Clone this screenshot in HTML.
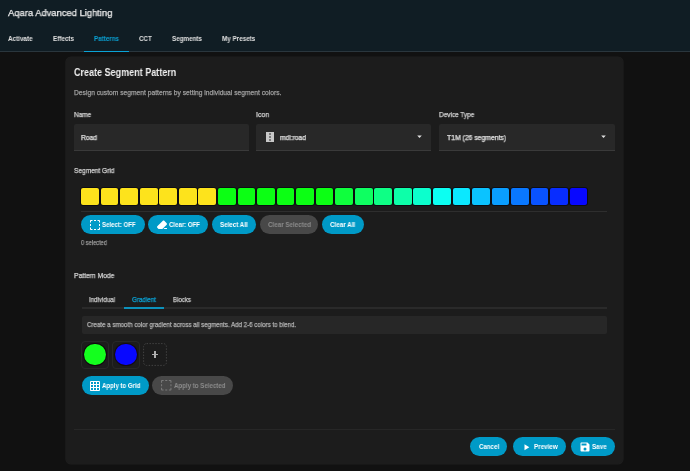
<!DOCTYPE html>
<html><head><meta charset="utf-8">
<style>
*{box-sizing:border-box;margin:0;padding:0}
html,body{width:690px;height:471px;overflow:hidden;background:#111111;font-family:"Liberation Sans",sans-serif;color:#e1e1e1}
.a{position:absolute}
.t{position:absolute;line-height:1;white-space:nowrap;transform-origin:0 0;will-change:transform;-webkit-text-stroke:0.25px currentColor}
.b{font-weight:bold;-webkit-text-stroke:0}
.field{position:absolute;top:123.5px;height:27.5px;background:#282828;border-radius:2px 2px 0 0;border-bottom:1px solid #3a3a3a}
.seg{position:absolute;top:188px;width:17.7px;height:17.2px;border-radius:2px;box-shadow:0 0 0 0.8px rgba(0,0,12,0.7)}
.btn{position:absolute;height:19px;border-radius:10px;background:#009ac7}
.btn.dis{background:#484848}
.divider{position:absolute;height:1.5px;background:#2e2e2e}
</style></head><body>

<div class="a" style="left:0;top:0;width:690px;height:51px;background:#101d24"></div>
<div class="a" style="left:0;top:51px;width:690px;height:1px;background:#2a363d"></div>
<div class="a" style="left:84px;top:50.7px;width:45px;height:1.5px;background:#0aa3d6"></div>
<div class="a" style="left:66.4px;top:57.4px;width:556.2px;height:407px;background:#1c1c1c;border-radius:5px;box-shadow:0 0 0 0.6px rgba(255,255,255,0.06)"></div>
<div class="field" style="left:74px;width:175px"></div>
<div class="field" style="left:256px;width:175.4px"></div>
<div class="field" style="left:439.4px;width:175.3px"></div>
<svg class="a" style="left:263.9px;top:130.8px" width="12" height="12" viewBox="0 0 24 24"><path fill="#c8c8c8" d="M11,16H13V20H11M11,10H13V14H11M11,4H13V8H11M4,22H20V2H4V22Z"/></svg>
<svg class="a" style="left:414.4px;top:131.3px" width="11" height="11" viewBox="0 0 24 24"><path fill="#e0e0e0" d="M7,10L12,15L17,10H7Z"/></svg>
<svg class="a" style="left:597.5px;top:131.2px" width="11" height="11" viewBox="0 0 24 24"><path fill="#e0e0e0" d="M7,10L12,15L17,10H7Z"/></svg>
<div class="seg" style="left:81.20px;background:#fde31c"></div><div class="seg" style="left:100.74px;background:#fde31c"></div><div class="seg" style="left:120.29px;background:#fde31c"></div><div class="seg" style="left:139.83px;background:#fde31c"></div><div class="seg" style="left:159.38px;background:#fde31c"></div><div class="seg" style="left:178.92px;background:#fde31c"></div><div class="seg" style="left:198.46px;background:#fde31c"></div><div class="seg" style="left:218.01px;background:#0cff14"></div><div class="seg" style="left:237.55px;background:#0cff14"></div><div class="seg" style="left:257.10px;background:#0cff14"></div><div class="seg" style="left:276.64px;background:#0cff14"></div><div class="seg" style="left:296.18px;background:#0cff14"></div><div class="seg" style="left:315.73px;background:#0cff14"></div><div class="seg" style="left:335.27px;background:#0fff3d"></div><div class="seg" style="left:354.82px;background:#0eff61"></div><div class="seg" style="left:374.36px;background:#0eff85"></div><div class="seg" style="left:393.90px;background:#0dffa9"></div><div class="seg" style="left:413.45px;background:#0cffcd"></div><div class="seg" style="left:432.99px;background:#0cfff2"></div><div class="seg" style="left:452.54px;background:#0be8ff"></div><div class="seg" style="left:472.08px;background:#0bc3ff"></div><div class="seg" style="left:491.62px;background:#0a9eff"></div><div class="seg" style="left:511.17px;background:#0978ff"></div><div class="seg" style="left:530.71px;background:#0953ff"></div><div class="seg" style="left:550.26px;background:#082dff"></div><div class="seg" style="left:569.80px;background:#0808ff"></div>
<div class="divider" style="left:81px;top:210.8px;width:526px"></div>
<div class="btn" style="left:81px;top:215px;width:63.5px"></div>
<svg class="a" style="left:88.6px;top:218.6px" width="12" height="12" viewBox="0 0 24 24"><path fill="#fff" d="M2,4C2,2.89 2.9,2 4,2H7V4H4V7H2V4M22,4V7H20V4H17V2H20A2,2 0 0,1 22,4M20,20V17H22V20C22,21.11 21.1,22 20,22H17V20H20M2,20V17H4V20H7V22H4A2,2 0 0,1 2,20M10,2H14V4H10V2M10,20H14V22H10V20M20,10H22V14H20V10M2,10H4V14H2V10Z"/></svg>
<div class="btn" style="left:148px;top:215px;width:60px"></div>
<svg class="a" style="left:156px;top:218.5px" width="12" height="12" viewBox="0 0 24 24"><path fill="#fff" d="M15.14,3C14.63,3 14.12,3.2 13.73,3.59L2.59,14.73C1.81,15.5 1.81,16.77 2.59,17.56L5.03,20H12.69L21.41,11.27C22.2,10.5 22.2,9.23 21.41,8.44L16.56,3.59C16.17,3.2 15.65,3 15.14,3M17,18L15,20H22V18"/></svg>
<div class="btn" style="left:211.7px;top:215px;width:44.4px"></div>
<div class="btn dis" style="left:259.8px;top:215px;width:58.7px"></div>
<div class="btn" style="left:322.2px;top:215px;width:41.6px"></div>
<div class="divider" style="left:81.5px;top:307.2px;width:525.5px;height:1.5px;background:#2a2a2a"></div>
<div class="a" style="left:124.4px;top:307px;width:39.6px;height:1.7px;background:#0c92bc"></div>
<div class="a" style="left:81.5px;top:316px;width:525.5px;height:17.5px;background:#272727;border-radius:2px"></div>
<div class="a" style="left:81.2px;top:341.2px;width:27.5px;height:27.5px;border:1px solid #282828;border-radius:4px"></div>
<div class="a" style="left:84.2px;top:343.8px;width:21.6px;height:21.6px;border-radius:50%;background:#14ff1e;box-shadow:0 0 0 1px rgba(16,0,12,0.8)"></div>
<div class="a" style="left:112.4px;top:341.2px;width:27.5px;height:27.5px;border:1px solid #282828;border-radius:4px"></div>
<div class="a" style="left:115.4px;top:343.8px;width:21.6px;height:21.6px;border-radius:50%;background:#0808ff;box-shadow:0 0 0 1px rgba(16,0,12,0.6)"></div>
<svg class="a" style="left:143px;top:343px" width="24" height="23" viewBox="0 0 24 23"><rect x="0.6" y="0.6" width="22.8" height="21.8" rx="3" fill="none" stroke="#444" stroke-width="1" stroke-dasharray="1.4 1.5"/></svg>
<div class="a" style="left:151.8px;top:353.9px;width:6.4px;height:1.3px;background:#b0b0b0"></div>
<div class="a" style="left:154.35px;top:351.3px;width:1.3px;height:6.4px;background:#b0b0b0"></div>
<div class="btn" style="left:81.5px;top:376px;width:67px"></div>
<svg class="a" style="left:88.9px;top:379.6px" width="12" height="12" viewBox="0 0 24 24"><path fill="#fff" d="M10,4V8H14V4H10M16,4V8H20V4H16M16,10V14H20V10H16M16,16V20H20V16H16M14,20V16H10V20H14M8,20V16H4V20H8M8,14V10H4V14H8M8,8V4H4V8H8M10,14H14V10H10V14M4,2H20A2,2 0 0,1 22,4V20A2,2 0 0,1 20,22H4C2.89,22 2,21.1 2,20V4A2,2 0 0,1 4,2Z"/></svg>
<div class="btn dis" style="left:152px;top:376px;width:81px"></div>
<svg class="a" style="left:159.6px;top:379.4px" width="12.5" height="12.5" viewBox="0 0 24 24"><path fill="#7a7a7a" d="M2,4C2,2.89 2.9,2 4,2H7V4H4V7H2V4M22,4V7H20V4H17V2H20A2,2 0 0,1 22,4M20,20V17H22V20C22,21.11 21.1,22 20,22H17V20H20M2,20V17H4V20H7V22H4A2,2 0 0,1 2,20M10,2H14V4H10V2M10,20H14V22H10V20M20,10H22V14H20V10M2,10H4V14H2V10Z"/></svg>
<div class="divider" style="left:74px;top:429px;width:541px;height:1px;background:#272727"></div>
<div class="btn" style="left:470.3px;top:437.3px;width:36.8px"></div>
<div class="btn" style="left:512.5px;top:437.3px;width:53.3px"></div>
<svg class="a" style="left:520.6px;top:441.85px" width="10.5" height="10.5" viewBox="0 0 24 24"><path fill="#fff" d="M8,5.14V19.14L19,12.14L8,5.14Z"/></svg>
<div class="btn" style="left:571.3px;top:437.3px;width:43.4px"></div>
<svg class="a" style="left:578.5px;top:440.8px" width="12" height="12" viewBox="0 0 24 24"><path fill="#fff" d="M15,9H5V5H15M12,19A3,3 0 0,1 9,16A3,3 0 0,1 12,13A3,3 0 0,1 15,16A3,3 0 0,1 12,19M17,3H5C3.89,3 3,3.9 3,5V19A2,2 0 0,0 5,21H19A2,2 0 0,0 21,19V7L17,3Z"/></svg>

<div class="t" style="left:8.00px;top:8.02px;font-size:9.78px;color:#f0f0f0;transform:scaleX(0.961)">Aqara Advanced Lighting</div>
<div class="t b" style="left:8.00px;top:36.13px;font-size:6.70px;color:#e1e1e1;transform:scaleX(0.947)">Activate</div>
<div class="t b" style="left:52.80px;top:36.13px;font-size:6.70px;color:#e1e1e1;transform:scaleX(0.944)">Effects</div>
<div class="t b" style="left:94.00px;top:36.13px;font-size:6.70px;color:#0aa3d6;transform:scaleX(0.932)">Patterns</div>
<div class="t b" style="left:139.00px;top:36.13px;font-size:6.70px;color:#e1e1e1;transform:scaleX(0.929)">CCT</div>
<div class="t b" style="left:172.00px;top:36.13px;font-size:6.70px;color:#e1e1e1;transform:scaleX(0.936)">Segments</div>
<div class="t b" style="left:221.90px;top:36.13px;font-size:6.70px;color:#e1e1e1;transform:scaleX(0.943)">My Presets</div>
<div class="t b" style="left:73.70px;top:67.57px;font-size:10.20px;color:#f0f0f0;transform:scaleX(0.885)">Create Segment Pattern</div>
<div class="t" style="left:74.00px;top:90.03px;font-size:6.70px;color:#9e9e9e;transform:scaleX(1.002)">Design custom segment patterns by setting individual segment colors.</div>
<div class="t" style="left:74.00px;top:111.97px;font-size:7.12px;color:#d4d4d4;transform:scaleX(0.905)">Name</div>
<div class="t" style="left:256.30px;top:111.97px;font-size:7.12px;color:#d4d4d4;transform:scaleX(0.980)">Icon</div>
<div class="t" style="left:439.30px;top:111.97px;font-size:7.12px;color:#d4d4d4;transform:scaleX(0.906)">Device Type</div>
<div class="t" style="left:81.20px;top:133.79px;font-size:6.98px;color:#e1e1e1;transform:scaleX(0.958)">Road</div>
<div class="t" style="left:279.50px;top:133.79px;font-size:6.98px;color:#e1e1e1;transform:scaleX(0.957)">mdi:road</div>
<div class="t" style="left:447.00px;top:133.79px;font-size:6.98px;color:#e1e1e1;transform:scaleX(0.978)">T1M (26 segments)</div>
<div class="t" style="left:73.60px;top:167.39px;font-size:6.98px;color:#d4d4d4;transform:scaleX(0.940)">Segment Grid</div>
<div class="t b" style="left:102.30px;top:221.83px;font-size:6.70px;color:#ffffff;transform:scaleX(0.905)">Select: OFF</div>
<div class="t b" style="left:169.00px;top:221.83px;font-size:6.70px;color:#ffffff;transform:scaleX(0.905)">Clear: OFF</div>
<div class="t b" style="left:220.00px;top:221.83px;font-size:6.70px;color:#ffffff;transform:scaleX(0.928)">Select All</div>
<div class="t b" style="left:267.80px;top:221.83px;font-size:6.70px;color:#8c8c8c;transform:scaleX(0.935)">Clear Selected</div>
<div class="t b" style="left:330.40px;top:221.83px;font-size:6.70px;color:#ffffff;transform:scaleX(0.934)">Clear All</div>
<div class="t" style="left:81.00px;top:240.13px;font-size:6.70px;color:#969696;transform:scaleX(0.851)">0 selected</div>
<div class="t" style="left:73.60px;top:272.09px;font-size:6.98px;color:#d4d4d4;transform:scaleX(0.964)">Pattern Mode</div>
<div class="t" style="left:89.00px;top:296.09px;font-size:6.98px;color:#cdcdcd;transform:scaleX(0.881)">Individual</div>
<div class="t" style="left:132.00px;top:296.09px;font-size:6.98px;color:#0aa3d6;transform:scaleX(0.896)">Gradient</div>
<div class="t" style="left:173.00px;top:296.09px;font-size:6.98px;color:#cdcdcd;transform:scaleX(0.875)">Blocks</div>
<div class="t" style="left:87.00px;top:321.09px;font-size:6.98px;color:#b4b4b4;transform:scaleX(0.885)">Create a smooth color gradient across all segments. Add 2-6 colors to blend.</div>
<div class="t b" style="left:102.30px;top:381.79px;font-size:6.98px;color:#ffffff;transform:scaleX(0.868)">Apply to Grid</div>
<div class="t b" style="left:173.80px;top:381.79px;font-size:6.98px;color:#8c8c8c;transform:scaleX(0.881)">Apply to Selected</div>
<div class="t b" style="left:479.00px;top:444.24px;font-size:6.56px;color:#ffffff;transform:scaleX(0.938)">Cancel</div>
<div class="t b" style="left:533.70px;top:444.24px;font-size:6.56px;color:#ffffff;transform:scaleX(0.955)">Preview</div>
<div class="t b" style="left:592.00px;top:444.24px;font-size:6.56px;color:#ffffff;transform:scaleX(0.959)">Save</div>
</body></html>
